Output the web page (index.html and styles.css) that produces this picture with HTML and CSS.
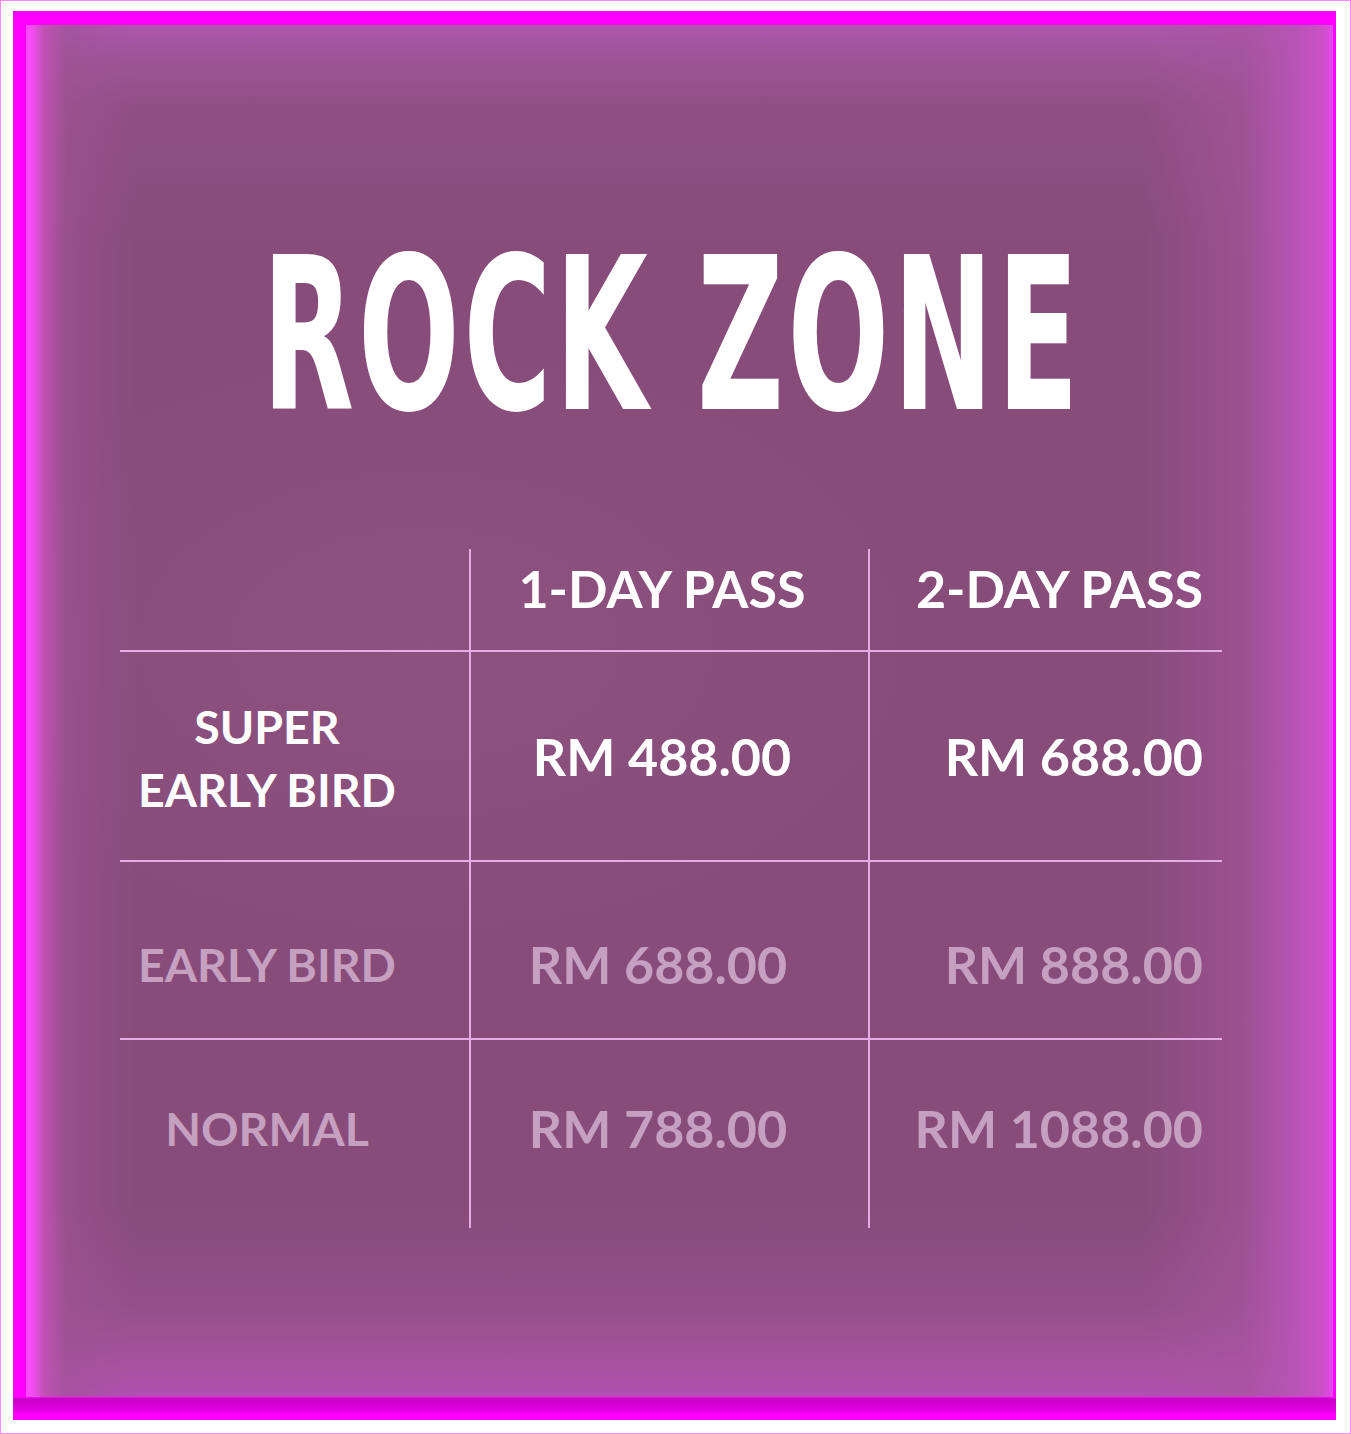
FILE: index.html
```html
<!DOCTYPE html>
<html lang="en">
<head>
<meta charset="utf-8">
<title>Rock Zone</title>
<link rel="stylesheet" href="styles.css">
</head>
<body>
<div class="page">
  <div class="glow">
    <div class="panel">
      <h1 class="title"><span class="title-text">ROCK ZONE</span></h1>
      <div class="prices">
        <div class="cell c1 head"></div>
        <div class="cell c2 head">1-DAY PASS</div>
        <div class="cell c3 head">2-DAY PASS</div>

        <div class="cell c1 r1 label">SUPER<br>EARLY BIRD</div>
        <div class="cell c2 r1">RM 488.00</div>
        <div class="cell c3 r1">RM 688.00</div>

        <div class="cell c1 r2 label faded">EARLY BIRD</div>
        <div class="cell c2 r2 faded shift">RM 688.00</div>
        <div class="cell c3 r2 faded">RM 888.00</div>

        <div class="cell c1 r3 label faded">NORMAL</div>
        <div class="cell c2 r3 faded shift">RM 788.00</div>
        <div class="cell c3 r3 faded">RM 1088.00</div>
      </div>
    </div>
  </div>
</div>
</body>
</html>
```

FILE: styles.css
```css
html, body {
  margin: 0;
  padding: 0;
  background: #ffffff;
}

.page {
  width: 1351px;
  height: 1434px;
  box-sizing: border-box;
  border: 1px solid #ff86ff;
  padding: 10px 14px 13px 12px;
  background: #ffffff;
}

.glow {
  height: 100%;
  box-sizing: border-box;
  padding: 14px 3px 23px 13px;
  background: linear-gradient(to bottom, #ff00ff 0, #ff00ff 1386px, #c800c8 1388px, #e000e0 1398px, #ff00ff 1404px);
}

.panel {
  height: 100%;
  box-sizing: border-box;
  padding: 0 0 0 94px;
  background:
    linear-gradient(to right, #ff46ff 0, #f24cf0 7px, #c052b4 18px, rgba(160, 82, 150, 0.6) 40px, rgba(140, 78, 128, 0) 110px),
    linear-gradient(to left, #e846f2 0, #cc50c8 10px, #b654b4 40px, rgba(168, 84, 160, 0.6) 90px, rgba(140, 78, 128, 0) 190px),
    linear-gradient(to bottom, #b056b0 0, #a0559c 25px, rgba(150, 82, 140, 0.6) 80px, rgba(140, 78, 128, 0) 220px),
    linear-gradient(to top, #b050b4 0, #a8529f 30px, rgba(156, 82, 150, 0.6) 90px, rgba(140, 78, 128, 0) 190px),
    radial-gradient(ellipse 500px 300px at 400px 620px, rgba(160, 100, 150, 0.25), rgba(160, 100, 150, 0)),
    #884c7a;
  font-family: Lato, "Open Sans", sans-serif;
  color: #ffffff;
}

.title {
  margin: 0;
  padding-top: 205px;
  padding-left: 142px;
  height: 412px;
  box-sizing: border-box;
  font-family: "DejaVu Sans Condensed", "DejaVu Sans", sans-serif;
  font-weight: bold;
  font-size: 133px;
  line-height: 1;
  color: #ffffff;
  white-space: nowrap;
}

.title-text {
  display: inline-block;
  transform: scaleY(1.594);
  transform-origin: 0 0;
  letter-spacing: 3.8px;
}

.prices {
  margin-top: 112px;
  width: 1102px;
  display: grid;
  grid-template-columns: 351px 399px 352px;
  grid-template-rows: 103px 210px 178px 188px;
}

.cell {
  box-sizing: border-box;
  display: flex;
  align-items: center;
  font-weight: 700;
  font-size: 52px;
  line-height: 1.2;
  white-space: nowrap;
  border-bottom: 2px solid #e6ace4;
}

.c1, .c2 {
  border-right: 2px solid #e6ace4;
}

.r3 {
  border-bottom: none;
}

.c1 {
  justify-content: center;
  padding-right: 55px;
}

.c2 {
  justify-content: center;
  padding-right: 15px;
}

.c2.shift {
  padding-right: 23px;
}

.c3 {
  justify-content: flex-end;
  padding-right: 19px;
}

.head {
  padding-bottom: 22px;
}

.label {
  font-size: 46.5px;
  line-height: 63px;
  text-align: center;
}

.r1.label {
  padding-top: 4px;
}

.r2 {
  padding-top: 28px;
}

.r3 {
  padding-bottom: 12px;
}

.faded {
  color: #c5a0c0;
}
```
